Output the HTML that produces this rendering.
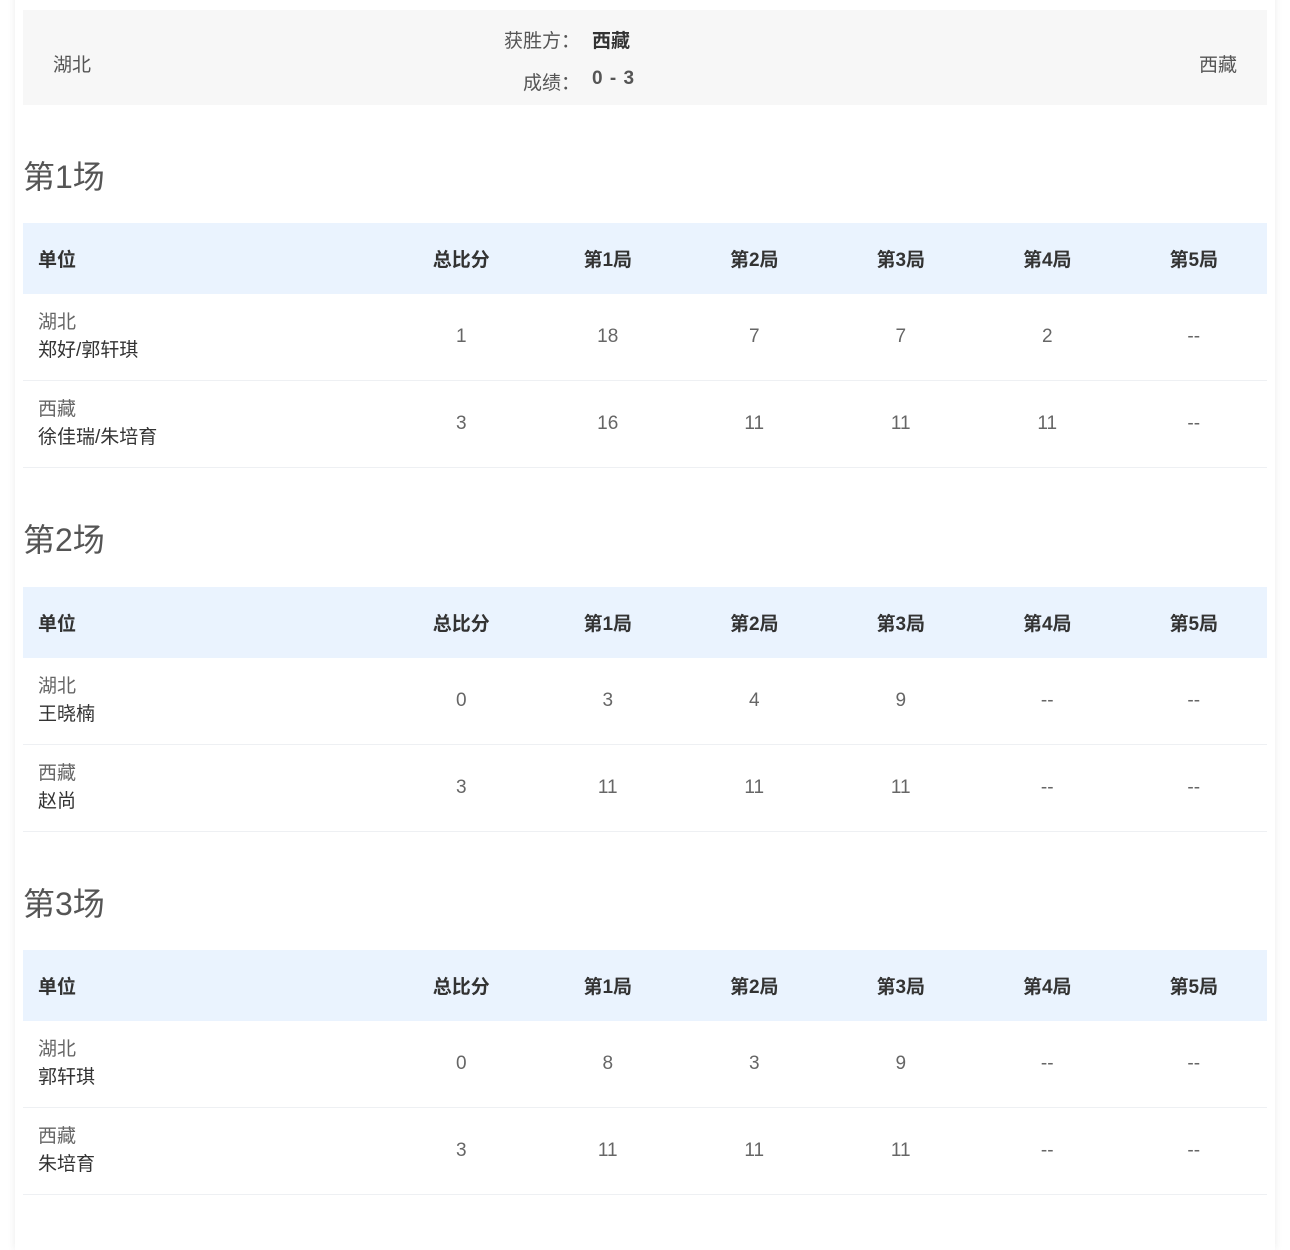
<!DOCTYPE html>
<html><head><meta charset="utf-8"><style>
body{margin:0;background:#fff;font-family:"Liberation Sans","Noto Sans CJK SC",sans-serif;width:1290px;height:1229px;overflow:hidden;position:relative}
.card{position:absolute;left:15px;top:-10px;width:1260px;height:1260px;background:#fff;box-shadow:0 0 8px rgba(0,0,0,0.08)}
.hdr{position:absolute;left:23px;top:10px;width:1244px;height:95px;background:#f7f7f7;color:#555;font-size:19px}
.hdr .l{position:absolute;left:30px;top:40px}
.hdr .r{position:absolute;right:30px;top:40px}
.hdr .m1{position:absolute;left:357px;width:200px;text-align:right;top:16px}
.hdr .m2{position:absolute;left:357px;width:200px;text-align:right;top:58px}
.hdr .v1{position:absolute;left:569px;top:16px;color:#333;font-weight:bold}
.hdr .v2{position:absolute;left:569px;top:58px;color:#555;font-weight:bold;letter-spacing:1px}
.t{position:absolute;left:23px;font-size:32px;color:#555}
table{position:absolute;left:23px;width:1244px;border-collapse:collapse;font-size:19px;table-layout:fixed}
th{background:#eaf3fe;height:71px;color:#333;font-weight:bold;text-align:center;padding:0}
td{height:86px;border-bottom:1px solid #eef0f3;text-align:center;color:#666;padding:0}
th:first-child,td:first-child{text-align:left;padding-left:15px}
td:first-child{line-height:28px}
.a{color:#666}.b{color:#333}
</style></head><body>
<div class="card"></div>
<div class="hdr"><span class="l">湖北</span><span class="m1">获胜方：</span><span class="v1">西藏</span><span class="m2">成绩：</span><span class="v2">0 - 3</span><span class="r">西藏</span></div>

<div class="t" style="top:152px">第1场</div>
<table style="top:223px"><colgroup><col style="width:365px"><col><col><col><col><col><col></colgroup><tr><th>单位</th><th>总比分</th><th>第1局</th><th>第2局</th><th>第3局</th><th>第4局</th><th>第5局</th></tr>
<tr><td><span class="a">湖北</span><br><span class="b">郑好/郭轩琪</span></td><td>1</td><td>18</td><td>7</td><td>7</td><td>2</td><td>--</td></tr>
<tr><td><span class="a">西藏</span><br><span class="b">徐佳瑞/朱培育</span></td><td>3</td><td>16</td><td>11</td><td>11</td><td>11</td><td>--</td></tr></table>

<div class="t" style="top:515px">第2场</div>
<table style="top:587px"><colgroup><col style="width:365px"><col><col><col><col><col><col></colgroup><tr><th>单位</th><th>总比分</th><th>第1局</th><th>第2局</th><th>第3局</th><th>第4局</th><th>第5局</th></tr>
<tr><td><span class="a">湖北</span><br><span class="b">王晓楠</span></td><td>0</td><td>3</td><td>4</td><td>9</td><td>--</td><td>--</td></tr>
<tr><td><span class="a">西藏</span><br><span class="b">赵尚</span></td><td>3</td><td>11</td><td>11</td><td>11</td><td>--</td><td>--</td></tr></table>

<div class="t" style="top:879px">第3场</div>
<table style="top:950px"><colgroup><col style="width:365px"><col><col><col><col><col><col></colgroup><tr><th>单位</th><th>总比分</th><th>第1局</th><th>第2局</th><th>第3局</th><th>第4局</th><th>第5局</th></tr>
<tr><td><span class="a">湖北</span><br><span class="b">郭轩琪</span></td><td>0</td><td>8</td><td>3</td><td>9</td><td>--</td><td>--</td></tr>
<tr><td><span class="a">西藏</span><br><span class="b">朱培育</span></td><td>3</td><td>11</td><td>11</td><td>11</td><td>--</td><td>--</td></tr></table>
</body></html>
